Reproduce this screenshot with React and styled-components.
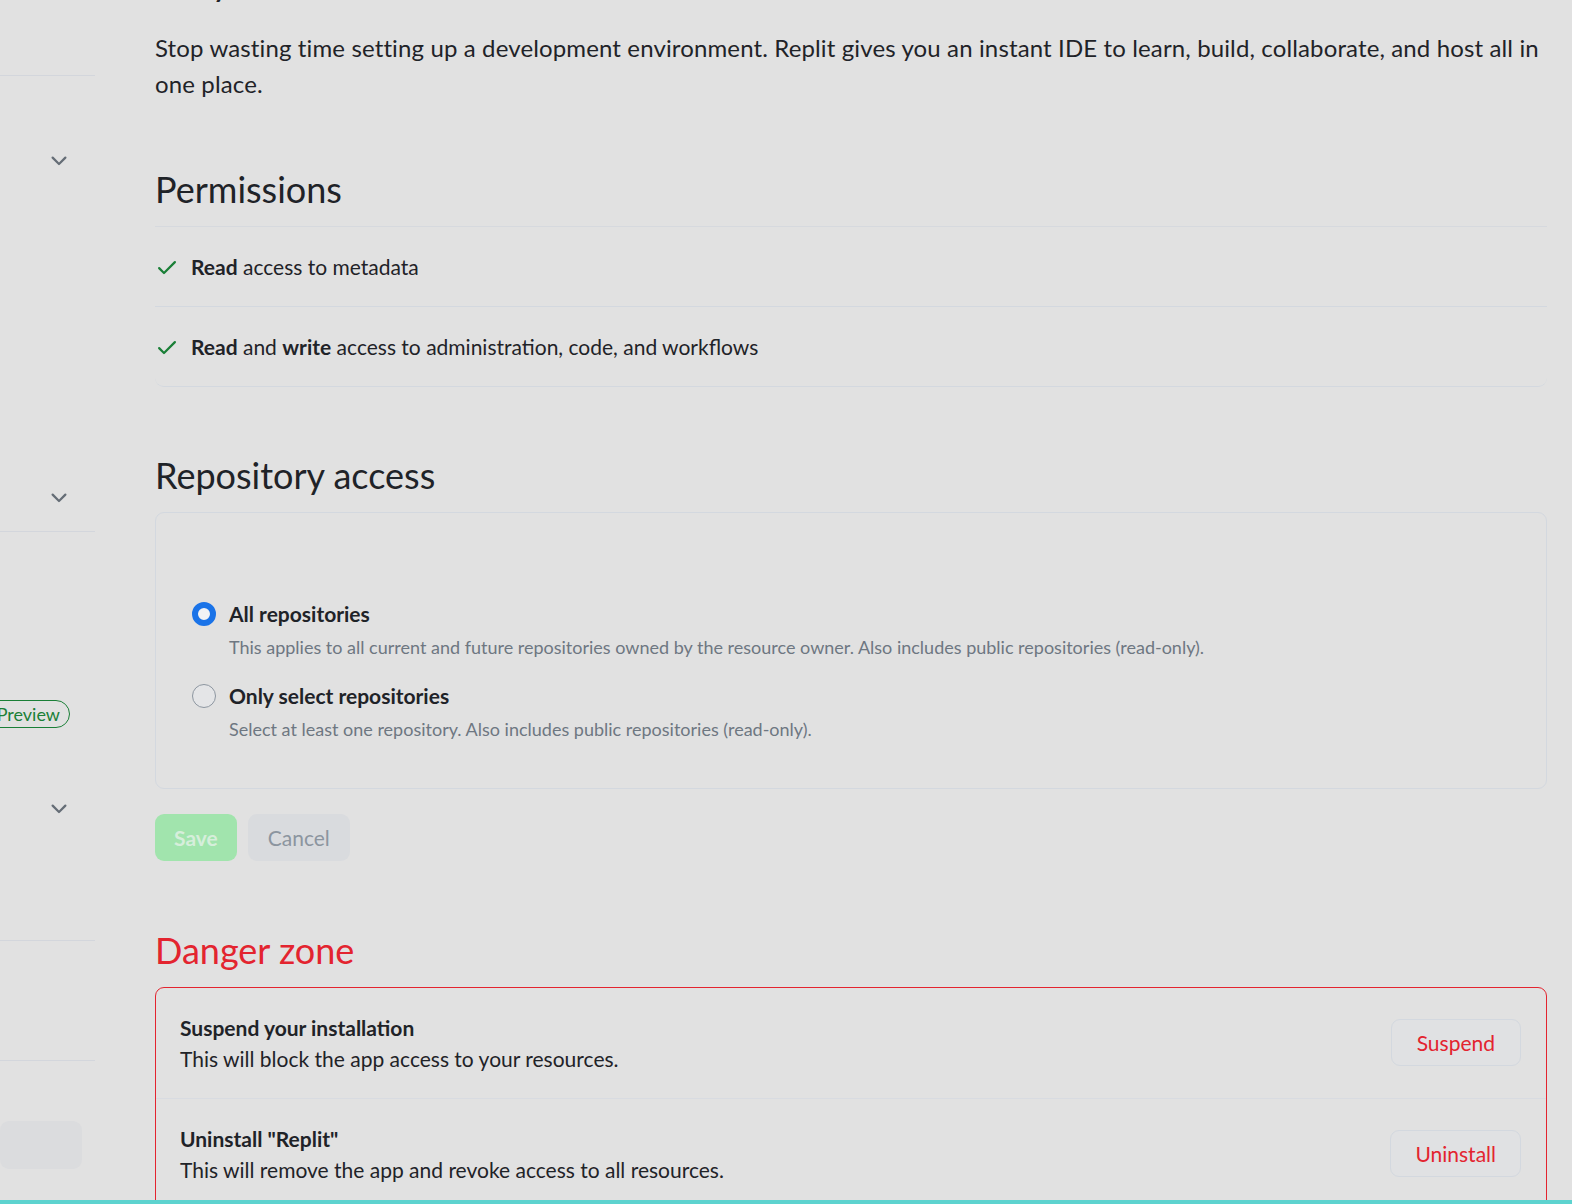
import React from "react";
import styled, { createGlobalStyle } from "styled-components";

const Global = createGlobalStyle`
  html, body { margin: 0; padding: 0; background: #e1e1e1; }
  body { font-family: Lato, "Noto Sans", "Liberation Sans", sans-serif; color: #1f2328; }
  * { box-sizing: border-box; }
`;

const Screen = styled.div`
  display: flex;
  flex-direction: column;
  width: 1572px;
  height: 1204px;
  overflow: hidden;
`;

const Viewport = styled.div`
  flex: 1;
  display: flex;
  overflow: hidden;
`;

const TealBar = styled.div`
  height: 4px;
  background: #5dd3cf;
`;

const Sidebar = styled.nav`
  width: 95px;
  flex-shrink: 0;
  display: flex;
  flex-direction: column;
  overflow: hidden;
`;

const SideBlock = styled.div`
  height: ${(p) => p.$h}px;
  flex-shrink: 0;
  border-bottom: ${(p) => (p.$last ? "none" : "1px solid #d3d6dc")};
  display: flex;
  flex-direction: column;
`;

const NavRow = styled.div`
  height: 48px;
  margin-top: ${(p) => p.$mt || 0}px;
  display: flex;
  align-items: center;
  justify-content: flex-end;
  padding-right: ${(p) => p.$pr ?? 24}px;
  color: #656d76;
`;

const Badge = styled.span`
  font-size: 18px;
  line-height: 26px;
  color: #1a7f37;
  border: 1px solid #1a7f37;
  border-radius: 20px;
  padding: 0 9px 0 24px;
  white-space: nowrap;
`;

const SideButton = styled.div`
  margin-top: 60px;
  margin-right: 13px;
  height: 48px;
  border-radius: 9px;
  background: #dbdcde;
`;

const Main = styled.main`
  width: 1392px;
  margin-left: 60px;
  flex-shrink: 0;
`;

const TopHeading = styled.h2`
  margin: -40px 0 25px;
  font-size: 36px;
  line-height: 45px;
  font-weight: 400;
`;

const Intro = styled.p`
  margin: 0;
  font-size: 24px;
  line-height: 36px;
  letter-spacing: 0.13px;
  color: #1f2328;
`;

const SubHead = styled.h2`
  margin: ${(p) => p.$mt}px 0 ${(p) => p.$mb || 0}px;
  font-size: 36px;
  line-height: 45px;
  font-weight: 400;
  color: ${(p) => (p.$danger ? "#e3242f" : "#1f2328")};
  padding-bottom: ${(p) => (p.$rule ? 14 : 0)}px;
  border-bottom: ${(p) => (p.$rule ? "1px solid #d6d9de" : "none")};
`;

const PermList = styled.ul`
  list-style: none;
  margin: 0;
  padding: 0;
  border-bottom: 1px solid #d3d8df;
  border-radius: 0 0 9px 9px;
`;

const PermItem = styled.li`
  display: flex;
  align-items: center;
  gap: 12px;
  padding: 24px 0 23px;
  font-size: 21px;
  line-height: 32px;
  & + & {
    border-top: 1px solid #d3d8df;
  }
  b { font-weight: 700; }
`;

const CheckIcon = styled.svg`
  width: 24px;
  height: 24px;
  fill: #1a7f37;
  flex-shrink: 0;
`;

const RepoBox = styled.div`
  border: 1px solid #d3d8df;
  border-radius: 9px;
  height: 277px;
  padding: 86px 36px 0;
  display: flex;
  flex-direction: column;
  gap: 16px;
`;

const RadioOption = styled.label`
  display: grid;
  grid-template-columns: 24px 1fr;
  column-gap: 13px;
  align-items: center;
`;

const Radio = styled.span`
  width: 24px;
  height: 24px;
  border-radius: 50%;
  border: ${(p) => (p.$checked ? "6px solid #1a73e8" : "1px solid #8d96a0")};
  background: ${(p) => (p.$checked ? "#f2f3f5" : "#e4e5e7")};
`;

const RadioTitle = styled.span`
  font-size: 21px;
  line-height: 30px;
  font-weight: 700;
  color: #1f2328;
`;

const RadioDesc = styled.span`
  grid-column: 2;
  font-size: 18px;
  line-height: 36px;
  color: #6e7781;
`;

const Actions = styled.div`
  display: flex;
  gap: 11px;
  margin-top: 25px;
`;

const Button = styled.button`
  height: 47px;
  padding: 0 ${(p) => p.$px || 19}px;
  border-radius: 9px;
  font-family: inherit;
  font-size: 21px;
  font-weight: ${(p) => (p.$bold ? 700 : 400)};
  border: 1px solid ${(p) => p.$border || "transparent"};
  background: ${(p) => p.$bg};
  color: ${(p) => p.$color};
`;

const DangerBox = styled.div`
  border: 1px solid #e3242f;
  border-radius: 9px;
  height: 260px;
`;

const DangerRow = styled.div`
  display: flex;
  align-items: center;
  justify-content: space-between;
  padding: 24px 25px 24px 24px;
  & + & {
    border-top: 1px solid #d8dbe1;
  }
`;

const DangerText = styled.div`
  display: flex;
  flex-direction: column;
`;

const DangerTitle = styled.span`
  font-size: 21px;
  line-height: 31px;
  font-weight: 700;
  color: #1f2328;
`;

const DangerDesc = styled.span`
  font-size: 21px;
  line-height: 31px;
  color: #1f2328;
`;

const DangerButton = styled(Button)`
  margin-top: -2px;
`;

const Check = () => (
  <CheckIcon viewBox="0 0 16 16">
    <path d="M13.78 4.22a.75.75 0 0 1 0 1.06l-7.25 7.25a.75.75 0 0 1-1.06 0L2.22 9.28a.751.751 0 0 1 .018-1.042.751.751 0 0 1 1.042-.018L6 10.94l6.72-6.72a.75.75 0 0 1 1.06 0Z" />
  </CheckIcon>
);

const Chevron = () => (
  <svg width="24" height="24" viewBox="0 0 16 16" fill="#656d76">
    <path d="M12.78 5.22a.749.749 0 0 1 0 1.06l-4.25 4.25a.749.749 0 0 1-1.06 0L3.22 6.28a.749.749 0 1 1 1.06-1.06L8 8.94l3.72-3.72a.749.749 0 0 1 1.06 0Z" />
  </svg>
);

export default function App() {
  return (
    <>
      <Global />
      <Screen>
        <Viewport>
          <Sidebar>
            <SideBlock $h={76} />
            <SideBlock $h={456}>
              <NavRow $mt={61}><Chevron /></NavRow>
              <NavRow $mt={289}><Chevron /></NavRow>
            </SideBlock>
            <SideBlock $h={409}>
              <NavRow $mt={158} $pr={25}><Badge>Preview</Badge></NavRow>
              <NavRow $mt={47}><Chevron /></NavRow>
            </SideBlock>
            <SideBlock $h={120} />
            <SideBlock $h={150} $last>
              <SideButton />
            </SideBlock>
          </Sidebar>
          <Main>
            <TopHeading>Why</TopHeading>
            <Intro>
              Stop wasting time setting up a development environment. Replit gives you an instant IDE to learn, build, collaborate, and host all in one place.
            </Intro>

            <SubHead $mt={65} $rule>Permissions</SubHead>
            <PermList>
              <PermItem>
                <Check />
                <span><b>Read</b> access to metadata</span>
              </PermItem>
              <PermItem>
                <Check />
                <span><b>Read</b> and <b>write</b> access to administration, code, and workflows</span>
              </PermItem>
            </PermList>

            <SubHead $mt={66} $mb={14}>Repository access</SubHead>
            <RepoBox>
              <RadioOption>
                <Radio $checked />
                <RadioTitle>All repositories</RadioTitle>
                <RadioDesc>This applies to all current and future repositories owned by the resource owner. Also includes public repositories (read-only).</RadioDesc>
              </RadioOption>
              <RadioOption>
                <Radio />
                <RadioTitle>Only select repositories</RadioTitle>
                <RadioDesc>Select at least one repository. Also includes public repositories (read-only).</RadioDesc>
              </RadioOption>
            </RepoBox>

            <Actions>
              <Button $bold $bg="#a1e4ad" $color="#d6eedb" $px={18}>Save</Button>
              <Button $bg="#d9dbde" $color="#8c959f">Cancel</Button>
            </Actions>

            <SubHead $mt={67} $mb={14} $danger>Danger zone</SubHead>
            <DangerBox>
              <DangerRow>
                <DangerText>
                  <DangerTitle>Suspend your installation</DangerTitle>
                  <DangerDesc>This will block the app access to your resources.</DangerDesc>
                </DangerText>
                <DangerButton $bg="#e0e1e3" $border="#d3d8df" $color="#e3242f" $px={25}>Suspend</DangerButton>
              </DangerRow>
              <DangerRow>
                <DangerText>
                  <DangerTitle>Uninstall "Replit"</DangerTitle>
                  <DangerDesc>This will remove the app and revoke access to all resources.</DangerDesc>
                </DangerText>
                <DangerButton $bg="#e0e1e3" $border="#d3d8df" $color="#e3242f" $px={24}>Uninstall</DangerButton>
              </DangerRow>
            </DangerBox>
          </Main>
        </Viewport>
        <TealBar />
      </Screen>
    </>
  );
}
